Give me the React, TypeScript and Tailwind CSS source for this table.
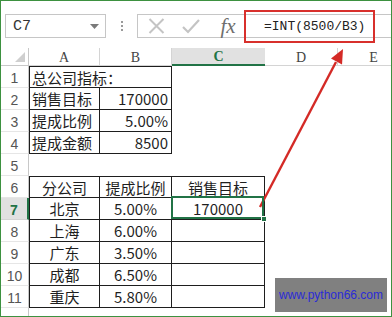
import clsx from 'clsx'

const COLS = ['A', 'B', 'C', 'D', 'E']

type Align = 'l' | 'r' | 'c'
interface CellDef {
  text?: string
  align?: Align
  edges?: string
}

const DATA: Record<number, Record<string, CellDef>> = {
  1: { A: { text: '总公司指标：', align: 'l', edges: 'tlb' }, B: { edges: 'trb' } },
  2: { A: { text: '销售目标', align: 'l', edges: 'lrb' }, B: { text: '170000', align: 'r', edges: 'rb' } },
  3: { A: { text: '提成比例', align: 'l', edges: 'lrb' }, B: { text: '5.00%', align: 'r', edges: 'rb' } },
  4: { A: { text: '提成金额', align: 'l', edges: 'lrb' }, B: { text: '8500', align: 'r', edges: 'rb' } },
  6: {
    A: { text: '分公司', align: 'c', edges: 'tlrb' },
    B: { text: '提成比例', align: 'c', edges: 'trb' },
    C: { text: '销售目标', align: 'c', edges: 'trb' },
  },
  7: {
    A: { text: '北京', align: 'c', edges: 'lrb' },
    B: { text: '5.00%', align: 'c', edges: 'rb' },
    C: { text: '170000', align: 'c', edges: 'rb' },
  },
  8: { A: { text: '上海', align: 'c', edges: 'lrb' }, B: { text: '6.00%', align: 'c', edges: 'rb' }, C: { edges: 'rb' } },
  9: { A: { text: '广东', align: 'c', edges: 'lrb' }, B: { text: '3.50%', align: 'c', edges: 'rb' }, C: { edges: 'rb' } },
  10: { A: { text: '成都', align: 'c', edges: 'lrb' }, B: { text: '6.50%', align: 'c', edges: 'rb' }, C: { edges: 'rb' } },
  11: { A: { text: '重庆', align: 'c', edges: 'lrb' }, B: { text: '5.80%', align: 'c', edges: 'rb' }, C: { edges: 'rb' } },
}

// row 12 is only a sliver at the bottom edge, its number is not visible
const ROWS = [1, 2, 3, 4, 5, 6, 7, 8, 9, 10, 11, 12]

function Cell({ row, col }: { row: number; col: string }) {
  const def = DATA[row]?.[col] ?? {}
  const e = def.edges ?? ''
  const selected = row === 7 && col === 'C'
  return (
    <div
      className={clsx(
        'relative h-[22px] flex items-center whitespace-nowrap border-[#1e1e1e]',
        e.includes('t') && 'border-t',
        e.includes('l') && 'border-l',
        e.includes('r') && 'border-r',
        e.includes('b') && 'border-b',
        def.align === 'l' && 'justify-start pl-[2px]',
        def.align === 'r' && 'justify-end pr-[3px]',
        def.align === 'c' && 'justify-center',
      )}
    >
      {def.text && <span className="text-[15px] leading-none text-[#1f1f1f]">{def.text}</span>}
      {selected && (
        <>
          <div className="absolute -left-[1px] -top-[2px] right-0 bottom-0 border-2 border-[#217346] z-10" />
          <div className="absolute -right-[3px] -bottom-[3px] w-[6px] h-[6px] bg-[#217346] border border-white z-20" />
        </>
      )}
    </div>
  )
}

export default function App() {
  return (
    <div className="relative w-[392px] h-[317px] overflow-hidden bg-white border border-[#3d9140] font-['Noto_Sans_CJK_SC',sans-serif]">
      {/* formula bar */}
      <div className="h-[47px] flex items-start pt-[13px] pl-[4px]">
        <div className="w-[101px] h-[24px] border border-[#c6c6c6] flex items-center justify-between pl-[7px] pr-[6px]">
          <span className="font-['Liberation_Mono',monospace] text-[15px] text-[#333] leading-none">C7</span>
          <svg width="9" height="5" viewBox="0 0 9 5">
            <path d="M0 0 H9 L4.5 5 Z" fill="#7a7a7a" />
          </svg>
        </div>
        <div className="w-[31px] h-[24px] flex flex-col items-center justify-center gap-[2px]">
          <span className="w-[2px] h-[2px] bg-[#9a9a9a]" />
          <span className="w-[2px] h-[2px] bg-[#9a9a9a]" />
          <span className="w-[2px] h-[2px] bg-[#9a9a9a]" />
        </div>
        <div className="flex-1 h-[24px] border border-r-0 border-[#c6c6c6] flex items-center">
          <div className="w-[36px] flex justify-center">
            <svg width="17" height="16" viewBox="0 0 17 16">
              <path d="M1.5 1 L15.5 15 M15.5 1 L1.5 15" stroke="#c4c4c4" strokeWidth="2" fill="none" />
            </svg>
          </div>
          <div className="w-[34px] flex justify-center">
            <svg width="18" height="15" viewBox="0 0 18 15">
              <path d="M1 8 L6 13 L17 1" stroke="#c4c4c4" strokeWidth="2.2" fill="none" />
            </svg>
          </div>
          <div className="w-[40px] flex justify-center">
            <span className="font-['Liberation_Serif',serif] italic text-[21px] leading-none text-[#6e6e6e]">fx</span>
          </div>
          <span className="pl-[16px] font-['Liberation_Mono',monospace] text-[13px] leading-none text-[#222]">=INT(8500/B3)</span>
        </div>
      </div>

      {/* grid */}
      <div className="grid grid-cols-[28px_71px_72px_93px_73px_72px]">
        <div className="h-[18px] border-r border-b border-[#c8c8c8] relative">
          <svg className="absolute right-[3px] bottom-[3px]" width="10" height="10" viewBox="0 0 10 10">
            <path d="M10 0 V10 H0 Z" fill="#cfcfcf" />
          </svg>
        </div>
        {COLS.map((c) => (
          <div
            key={c}
            className={clsx(
              'h-[18px] flex items-center justify-center pt-[2px] font-["Liberation_Serif",serif] text-[14px] leading-none',
              c === 'C'
                ? 'bg-[#e1e1e1] border-b-2 border-[#217346] text-[#217346] font-bold'
                : 'border-r border-b border-[#d4d4d4] text-[#444]',
            )}
          >
            {c}
          </div>
        ))}
        {ROWS.map((r) => (
          <div key={r} className="contents">
            <div
              className={clsx(
                'h-[22px] flex items-center justify-center pt-[2px] text-[14px] leading-none font-["Liberation_Sans",sans-serif]',
                r === 7
                  ? 'bg-[#e1e1e1] border-r-2 border-b border-r-[#217346] border-b-[#d4d4d4] text-[#217346] font-bold'
                  : 'border-r border-b border-r-[#c8c8c8] border-b-[#e6e6e6] text-[#555]',
              )}
            >
              {r < 12 ? r : ''}
            </div>
            {COLS.map((c) => (
              <Cell key={c} row={r} col={c} />
            ))}
          </div>
        ))}
      </div>

      {/* annotation: red frame + arrow */}
      <div className="absolute left-[243px] top-[9px] w-[131px] h-[33px] border-2 border-[#d8302c]" />
      <svg className="absolute -left-px -top-px pointer-events-none" width="392" height="317" viewBox="0 0 392 317">
        <line x1="260" y1="207" x2="336" y2="62" stroke="#d42a26" strokeWidth="2.4" />
        <path d="M343 49 L342 64.5 L331 58.5 Z" fill="#d42a26" />
      </svg>

      {/* watermark */}
      <div className="absolute left-[274px] top-[277px] w-[112px] h-[34px] bg-[#808080] flex items-center justify-center">
        <span className="font-['Liberation_Sans',sans-serif] text-[12px] text-[#2b2bd6]">www.python66.com</span>
      </div>
    </div>
  )
}
